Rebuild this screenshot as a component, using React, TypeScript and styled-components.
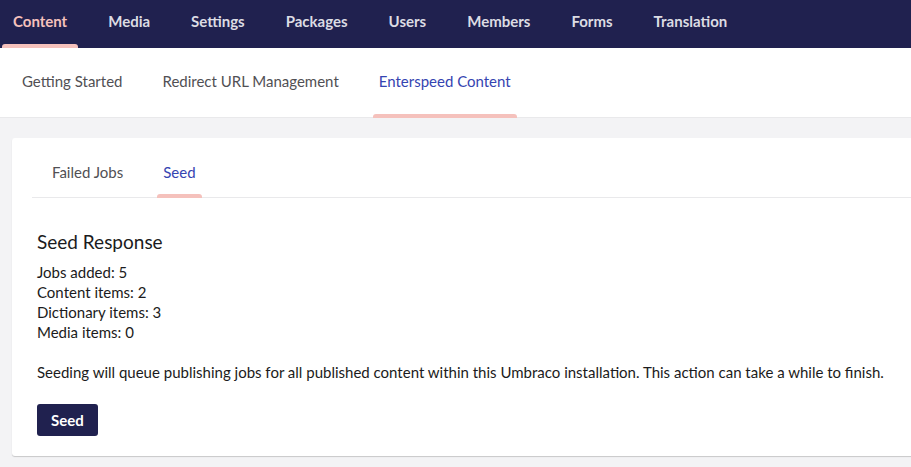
import React from 'react'
import styled, { createGlobalStyle } from 'styled-components'

const palette = {
  navy: '#20214f',
  pink: '#f5c1bc',
  blue: '#3544b1',
  grey: '#515054',
  navText: '#dcdce3',
  text: '#1b1b20',
  border: '#e9e9eb',
  surface: '#f3f3f5',
  white: '#ffffff',
}

const GlobalStyle = createGlobalStyle`
  * { box-sizing: border-box; }
  html, body {
    margin: 0;
    padding: 0;
    background: ${palette.surface};
    font-family: Lato, 'Open Sans', sans-serif;
    overflow: hidden;
  }
`

const Page = styled.div`
  display: flex;
  flex-direction: column;
  height: 467px;
`

const TopBar = styled.header`
  background-color: ${palette.navy};
  display: flex;
  gap: 15px;
  height: 48px;
`

type TActive = {
  active?: boolean
}

const Section = styled.a<TActive>`
  align-items: center;
  color: ${({ active }) => active ? palette.pink : palette.navText};
  display: flex;
  font-size: 15px;
  font-weight: bold;
  height: 48px;
  padding: 0 13px 7px;
  position: relative;

  &:after {
    background-color: ${palette.pink};
    border-radius: 3px 3px 0 0;
    bottom: 0;
    content: '';
    display: ${({ active }) => active ? 'block' : 'none'};
    height: 4px;
    left: 2px;
    position: absolute;
    right: 2px;
  }
`

const SubBar = styled.nav`
  background-color: ${palette.white};
  border-bottom: 1px solid ${palette.border};
  display: flex;
  gap: 28px;
  height: 70px;
  padding-left: 16px;
`

type TSubTab = TActive & {
  inset?: number
}

const SubTab = styled.a<TSubTab>`
  align-items: center;
  color: ${({ active }) => active ? palette.blue : palette.grey};
  display: flex;
  font-size: 15px;
  padding: ${({ inset = 0 }) => `${inset}px 6px 3px`};
  position: relative;

  &:after {
    background-color: ${palette.pink};
    border-radius: 3px 3px 0 0;
    bottom: -1px;
    content: '';
    display: ${({ active }) => active ? 'block' : 'none'};
    height: 4px;
    left: 0;
    position: absolute;
    right: 0;
  }
`

const Main = styled.main`
  flex: 1;
  padding: 20px 0 0 12px;
`

const Card = styled.section`
  background-color: ${palette.white};
  border-radius: 3px;
  box-shadow: 0 1px 1px rgba(0, 0, 0, 0.18);
  height: 318px;
  padding: 0 20px;
  width: 940px;
`

const Tabs = styled.div`
  border-bottom: 1px solid ${palette.border};
  display: flex;
  gap: 28px;
  height: 60px;
  padding-left: 14px;
`

const Body = styled.div`
  color: ${palette.text};
  font-size: 15px;
  line-height: 20px;
  padding: 32px 5px 0;
`

const Title = styled.h4`
  font-size: 19px;
  font-weight: normal;
  line-height: 24px;
  margin: 0 0 8px;
`

const Stats = styled.div`
  display: flex;
  flex-direction: column;
`

const Note = styled.p`
  margin: 20px 0 22px;
`

const Button = styled.button`
  background-color: ${palette.navy};
  border: 0;
  border-radius: 3px;
  color: ${palette.white};
  font-family: inherit;
  font-size: 15px;
  font-weight: bold;
  height: 32px;
  padding: 0 14px;
`

const sections = ['Content', 'Media', 'Settings', 'Packages', 'Users', 'Members', 'Forms', 'Translation']

const subTabs = ['Getting Started', 'Redirect URL Management', 'Enterspeed Content']

const stats = [
  { label: 'Jobs added', value: 5 },
  { label: 'Content items', value: 2 },
  { label: 'Dictionary items', value: 3 },
  { label: 'Media items', value: 0 },
]

const App = () => (
  <Page>
    <GlobalStyle />
    <TopBar>
      { sections.map((name) => (
        <Section key={name} active={name === 'Content'}>{name}</Section>
      )) }
    </TopBar>

    <SubBar>
      { subTabs.map((name) => (
        <SubTab key={name} active={name === 'Enterspeed Content'}>{name}</SubTab>
      )) }
    </SubBar>

    <Main>
      <Card>
        <Tabs>
          <SubTab inset={12}>Failed Jobs</SubTab>
          <SubTab inset={12} active>Seed</SubTab>
        </Tabs>

        <Body>
          <Title>Seed Response</Title>
          <Stats>
            { stats.map(({ label, value }) => (
              <span key={label}>{label}: {value}</span>
            )) }
          </Stats>
          <Note>
            Seeding will queue publishing jobs for all published content within this Umbraco installation. This action can take a while to finish.
          </Note>
          <Button>Seed</Button>
        </Body>
      </Card>
    </Main>
  </Page>
)

export default App
